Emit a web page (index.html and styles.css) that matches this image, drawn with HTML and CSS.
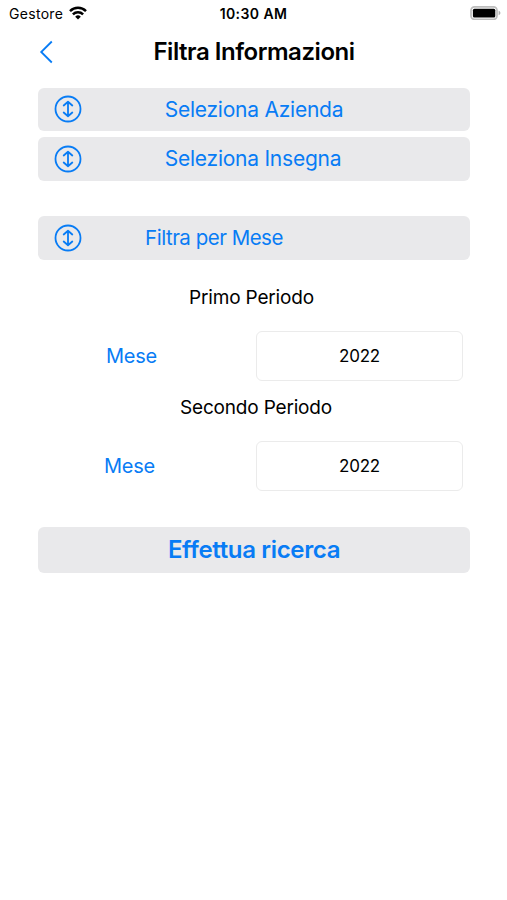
FILE: index.html
```html
<!DOCTYPE html>
<html lang="it">
<head>
<meta charset="utf-8">
<title>Filtra Informazioni</title>
<link rel="stylesheet" href="styles.css">
</head>
<body>
<header class="status">
  <div class="carrier"><span class="carrier-name">Gestore</span>
    <svg class="wifi" width="18" height="14" viewBox="0 0 18 14"><g fill="none" stroke="#000" stroke-width="2.5"><path d="M1 5.1a11.5 11.5 0 0 1 16 0"/><path d="M3.9 8.3a7.3 7.3 0 0 1 10.2 0"/></g><path d="M9 13.5L6.2 10.7a4 4 0 0 1 5.6 0z"/></svg>
  </div>
  <span class="time">10:30 AM</span>
  <svg class="battery" width="31" height="14" viewBox="0 0 31 14"><rect x="1" y=".9" width="26" height="12.4" rx="3.5" fill="none" stroke="#bdbdbd" stroke-width="1.7"/><rect x="2.9" y="2.7" width="22.4" height="8.8" rx="1.5"/><path d="M28.6 4.8c2.4.7 2.4 3.7 0 4.4z" fill="#b0b0b0"/></svg>
</header>
<nav class="nav">
  <svg class="back" width="14" height="24" viewBox="0 0 14 24"><path d="M12.8 1.5L2.2 12l10.6 10.5" fill="none" stroke="#087cf5" stroke-width="1.8"/></svg>
  <h1 class="title">Filtra Informazioni</h1>
</nav>
<main class="content">
  <button class="select"><svg class="updown" width="28" height="28" viewBox="0 0 28 28"><g fill="none" stroke="#087cf5" stroke-width="1.8" stroke-linecap="round" stroke-linejoin="round"><circle cx="14" cy="14" r="12.5"/><path d="M14 7v14M9.7 10.5L14 6.8l4.3 3.7M9.7 17.5l4.3 3.7 4.3-3.7"/></g></svg><span class="label">Seleziona Azienda</span></button>
  <button class="select"><svg class="updown" width="28" height="28" viewBox="0 0 28 28"><g fill="none" stroke="#087cf5" stroke-width="1.8" stroke-linecap="round" stroke-linejoin="round"><circle cx="14" cy="14" r="12.5"/><path d="M14 7v14M9.7 10.5L14 6.8l4.3 3.7M9.7 17.5l4.3 3.7 4.3-3.7"/></g></svg><span class="label label-insegna">Seleziona Insegna</span></button>
  <button class="select month-filter"><svg class="updown" width="28" height="28" viewBox="0 0 28 28"><g fill="none" stroke="#087cf5" stroke-width="1.8" stroke-linecap="round" stroke-linejoin="round"><circle cx="14" cy="14" r="12.5"/><path d="M14 7v14M9.7 10.5L14 6.8l4.3 3.7M9.7 17.5l4.3 3.7 4.3-3.7"/></g></svg><span class="label label-month">Filtra per Mese</span></button>
  <h2 class="period first">Primo Periodo</h2>
  <div class="row"><button class="month">Mese</button><input class="year" value="2022" aria-label="Anno"></div>
  <h2 class="period second">Secondo Periodo</h2>
  <div class="row row-second"><button class="month">Mese</button><input class="year" value="2022" aria-label="Anno"></div>
  <button class="search">Effettua ricerca</button>
</main>
</body>
</html>
```
FILE: styles.css
```css
* { box-sizing: border-box; }
body { margin: 0; background: #fff; color: #000; font-family: Inter, "Liberation Sans", sans-serif; }
button { border: 0; padding: 0; background: none; color: #087cf5; font-family: inherit; }
svg { display: block; flex: none; }
.status { display: grid; grid-template-columns: 1fr auto 1fr; align-items: center; height: 26px; padding: 0 6px 0 9px; }
.carrier { display: flex; align-items: center; gap: 6px; font-size: 14px; letter-spacing: .3px; }
.carrier-name { padding-top: 1px; }
.wifi { margin-top: -1px; }
.time { margin: 1px 3px 0 0; font-size: 14px; font-weight: 600; letter-spacing: .42px; }
.battery { justify-self: end; }
.nav { display: flex; align-items: center; height: 51px; padding: 0 39px; }
.title { flex: 1; margin: 0 13px 0 0; text-align: center; font-size: 24px; font-weight: 600; letter-spacing: -.46px; white-space: nowrap; }
.content { padding: 10.5px 37px 0 38px; }
.select { display: flex; align-items: center; width: 100%; height: 43.5px; margin-bottom: 6px; padding: 0 16px; border-radius: 6px; background: #e9e9eb; font-size: 21px; letter-spacing: -.24px; }
.label { flex: 1; margin-right: 28px; text-align: center; white-space: nowrap; }
.label-insegna { margin-right: 30px; }
.month-filter { margin-top: 35.5px; margin-bottom: 0; }
.label-month { margin-right: 108px; font-size: 20.5px; letter-spacing: -.5px; }
.period { margin: 0; text-align: center; font-size: 19px; font-weight: 400; line-height: 24px; letter-spacing: -.18px; }
.first { margin-top: 26px; padding-right: 5px; }
.second { margin-top: 15px; padding-left: 4px; }
.row { display: grid; grid-template-columns: 187px 207px; justify-content: end; padding-right: 7px; margin-top: 21px; }
.month { padding-right: 62px; font-size: 20px; letter-spacing: -.25px; }
.row-second .month { padding-right: 66px; }
.year { width: 100%; height: 50px; padding: 0; border: 1px solid #ebebeb; border-radius: 6px; background: #fff; color: #000; text-align: center; font: 17px Inter, "Liberation Sans", sans-serif; letter-spacing: -.2px; }
.search { display: block; width: 100%; height: 46px; margin-top: 36px; border-radius: 6px; background: #e9e9eb; font-size: 24px; font-weight: 600; letter-spacing: -.35px; }
```
